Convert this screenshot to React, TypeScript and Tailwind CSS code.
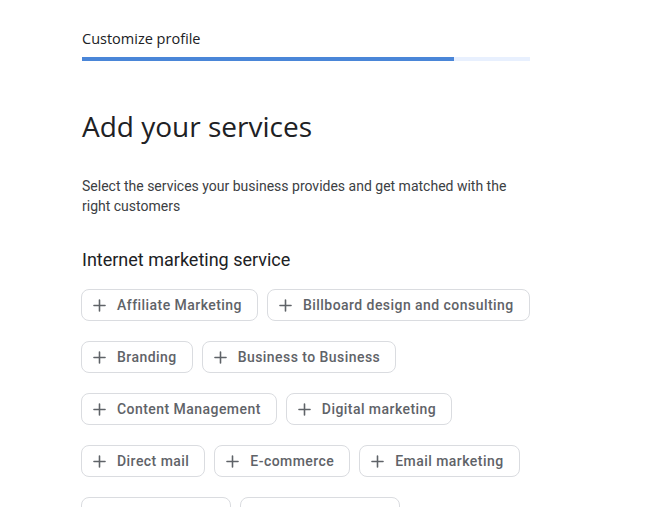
import { Plus } from 'lucide-react'

const services = [
  ['Affiliate Marketing', 'Billboard design and consulting'],
  ['Branding', 'Business to Business'],
  ['Content Management', 'Digital marketing'],
  ['Direct mail', 'E-commerce', 'Email marketing'],
  ['Event planning', 'Graphic designs'],
]

function Chip({ label }: { label: string }) {
  return (
    <button className="flex h-8 shrink-0 items-center gap-[8px] whitespace-nowrap rounded-lg border border-[#dadce0] bg-white pl-[8px] pr-[15px] text-[14px] font-medium tracking-[0.45px] text-[#5f6368] [font-family:Roboto,sans-serif]">
      <Plus className="h-[19px] w-[19px] text-[#5f6368]" strokeWidth={2} />
      <span>{label}</span>
    </button>
  )
}

export default function App() {
  return (
    <div className="min-h-screen bg-white pl-[81px] pt-[29px]">
      <div className="w-[449px]">
        <p className="pl-px text-[14.5px] leading-5 text-[#202124] [font-family:'Open_Sans',sans-serif]">
          Customize profile
        </p>
        <div className="ml-px mt-[8px] h-[4px] w-[448px] bg-[#e8f0fe]">
          <div className="h-full w-[83%] bg-[#4a86d8]" />
        </div>

        <h1 className="mt-[47px] pl-px text-[28px] leading-9 text-[#202124] [font-family:'Open_Sans',sans-serif]">
          Add your services
        </h1>

        <p className="mt-[32px] w-[448px] pl-px text-[14px] leading-5 text-[#3c4043] [font-family:Roboto,sans-serif]">
          Select the services your business provides and get matched with the right customers
        </p>

        <h2 className="mt-[32px] pl-px text-[18px] leading-6 text-[#202124] [font-family:Roboto,sans-serif]">
          Internet marketing service
        </h2>

        <div className="mt-[17px] flex flex-col gap-5">
          {services.map((row, i) => (
            <div key={i} className="flex gap-[9px]">
              {row.map((s) => (
                <Chip key={s} label={s} />
              ))}
            </div>
          ))}
        </div>
      </div>
    </div>
  )
}
